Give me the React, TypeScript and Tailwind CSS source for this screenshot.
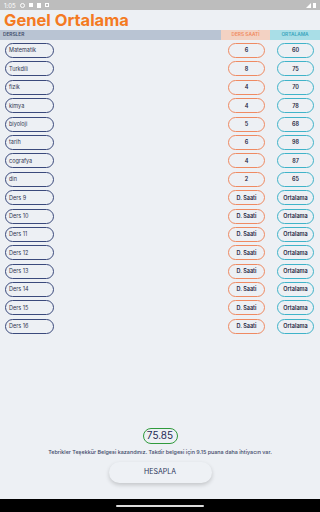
import React from "react";

const rows: [string, string, string][] = [
  ["Matematik", "6", "60"],
  ["Turkdili", "8", "75"],
  ["fizik", "4", "70"],
  ["kimya", "4", "78"],
  ["biyoloji", "5", "68"],
  ["tarih", "6", "98"],
  ["cografya", "4", "87"],
  ["din", "2", "65"],
  ["Ders 9", "", ""],
  ["Ders 10", "", ""],
  ["Ders 11", "", ""],
  ["Ders 12", "", ""],
  ["Ders 13", "", ""],
  ["Ders 14", "", ""],
  ["Ders 15", "", ""],
  ["Ders 16", "", ""],
];

export default function App() {
  return (
    <div
      className="w-[320px] h-[512px] bg-[#edf0f4] flex flex-col overflow-hidden"
      style={{ fontFamily: "Inter, 'Noto Sans', sans-serif" }}
    >
      <div className="h-[10px] bg-[#bdbdbd] flex items-center justify-between px-[4px] text-[6px] text-white">
        <div className="flex items-center gap-[4px]">
          <span>1:05</span>
          <span className="w-[5px] h-[5px] rounded-full border border-white"></span>
          <span className="w-[4px] h-[4px] bg-white"></span>
          <span className="w-[4px] h-[5px] bg-white"></span>
          <span className="w-[4px] h-[4px] border border-white"></span>
        </div>
        <div className="flex items-center gap-[2px]">
          <span className="w-0 h-0 border-l-[5px] border-l-transparent border-b-[5px] border-b-white"></span>
          <span className="w-[3px] h-[5px] bg-white"></span>
        </div>
      </div>
      <div className="h-[20px] flex items-center pl-[4px] text-[16.5px] font-bold text-[#f47a22] leading-none">
        Genel Ortalama
      </div>
      <div className="h-[10px] flex text-[4.8px] font-semibold">
        <div className="w-[221px] bg-[#b9c4d3] text-[#3d4b6b] flex items-center pl-[3px]">DERSLER</div>
        <div className="w-[49px] bg-[#f3d2c3] text-[#f08b5f] flex items-center justify-center">DERS SAATİ</div>
        <div className="flex-1 bg-[#a9dee7] text-[#3aa6bd] flex items-center justify-center">ORTALAMA</div>
      </div>
      <div className="flex flex-col gap-[3.4px] pt-[3px]">
        {rows.map(([name, h, g], i) => (
          <div key={i} className="flex items-center h-[15px]">
            <div className="ml-[5px] w-[49px] h-[15px] rounded-full border border-[#3b4a7c] flex items-center pl-[3px] text-[5.5px] text-[#2e3550]">
              {name}
            </div>
            <div className="ml-[174px] w-[37px] h-[15px] rounded-full border border-[#ef8a62] flex items-center justify-center text-[5.5px] font-semibold text-[#1f2540]">
              {h || "D. Saati"}
            </div>
            <div className="ml-[12px] w-[37px] h-[15px] rounded-full border border-[#3fb3c9] flex items-center justify-center text-[5.5px] font-semibold text-[#1f2540]">
              {g || "Ortalama"}
            </div>
          </div>
        ))}
      </div>
      <div className="flex-1"></div>
      <div className="flex flex-col items-center">
        <div className="w-[35px] h-[16px] rounded-full border-[1.5px] border-[#2f9a3c] flex items-center justify-center text-[10px] text-[#1f2a55]">
          75.85
        </div>
        <div className="mt-[4px] text-[5.4px] text-[#3d4868] font-medium whitespace-nowrap">
          Tebrikler Teşekkür Belgesi kazandınız. Takdir belgesi için 9.15 puana daha ihtiyacın var.
        </div>
        <div className="mt-[6px] w-[103px] h-[21px] rounded-full bg-[#eef1f5] shadow-[0_2px_4px_rgba(0,0,0,0.18)] flex items-center justify-center text-[7px] text-[#2a3458]">
          HESAPLA
        </div>
      </div>
      <div className="h-[16px]"></div>
      <div className="h-[13px] bg-black flex items-center justify-center">
        <div className="w-[88px] h-[2px] bg-[#dcdcdc] rounded-full"></div>
      </div>
    </div>
  );
}
